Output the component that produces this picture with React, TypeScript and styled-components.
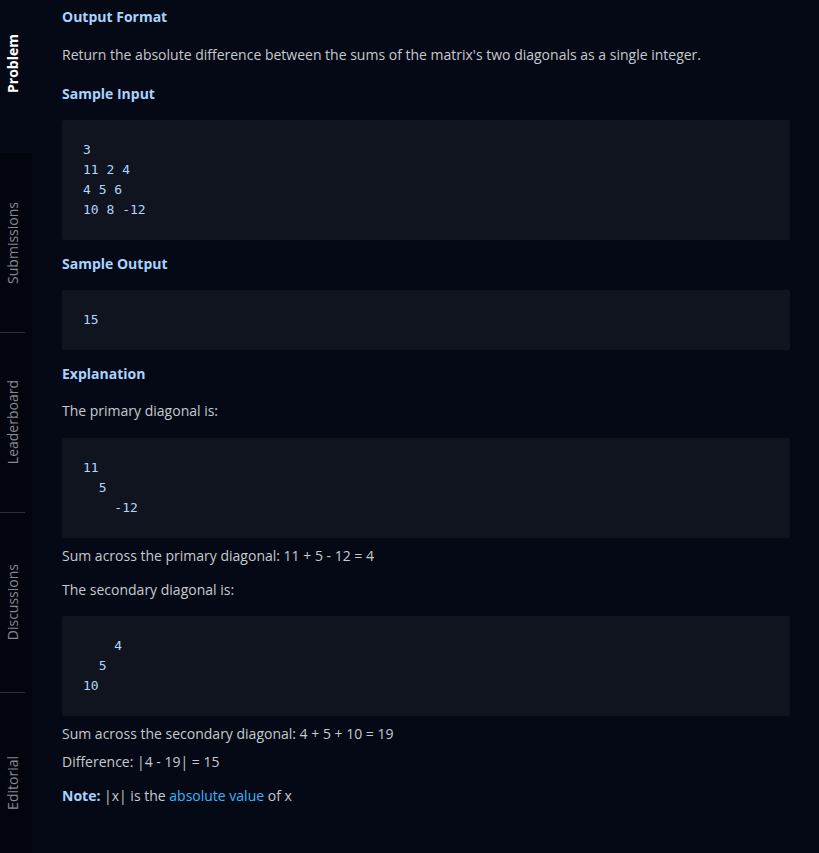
import * as React from 'react';
import styled, { createGlobalStyle } from 'styled-components';

const GlobalStyle = createGlobalStyle`
  html, body {
    margin: 0;
    padding: 0;
    background: #050915;
  }
  body {
    font-family: "Open Sans", "Liberation Sans", sans-serif;
  }
`;

interface ITab {
  label: string;
  active?: boolean;
  height: number;
  lift?: number;
  divider?: boolean;
}

// the page is scrolled, so the first tab is partly cut off at the top
const tabs: ITab[] = [
  { label: 'Problem', active: true, height: 153, lift: 27 },
  { label: 'Submissions', height: 180, divider: true },
  { label: 'Leaderboard', height: 180, divider: true },
  { label: 'Discussions', height: 180, divider: true },
  { label: 'Editorial', height: 180 },
];

const App = () => {
  return (
    <Page>
      <GlobalStyle />
      <SideBar>
        {tabs.map((t) => (
          <Tab
            key={t.label}
            active={t.active}
            divider={t.divider}
            lift={t.lift}
            style={{ height: t.height }}
          >
            <TabLabel active={t.active}>{t.label}</TabLabel>
          </Tab>
        ))}
      </SideBar>
      <Content>
        <Heading>Output Format</Heading>
        <Para gap={18}>
          Return the absolute difference between the sums of the matrix's two diagonals as a single integer.
        </Para>
        <Heading gap={19}>Sample Input</Heading>
        <Code gap={16}>{`3
11 2 4
4 5 6
10 8 -12`}</Code>
        <Heading gap={14}>Sample Output</Heading>
        <Code gap={16}>15</Code>
        <Heading gap={14}>Explanation</Heading>
        <Para gap={17}>The primary diagonal is:</Para>
        <Code gap={17}>{`11
  5
    -12`}</Code>
        <Para gap={8}>Sum across the primary diagonal: 11 + 5 - 12 = 4</Para>
        <Para gap={14}>The secondary diagonal is:</Para>
        <Code gap={16}>{`    4
  5
10`}</Code>
        <Para gap={8}>Sum across the secondary diagonal: 4 + 5 + 10 = 19</Para>
        <Para gap={8}>Difference: |4 - 19| = 15</Para>
        <Para gap={14}>
          <Strong>Note:</Strong> |x| is the <Link>absolute value</Link> of x
        </Para>
      </Content>
    </Page>
  );
};

export default App;

const Page = styled.div`
  display: flex;
  height: 853px;
  overflow: hidden;
  background: #050915;
`;

const SideBar = styled.div`
  width: 32px;
  flex-shrink: 0;
  display: flex;
  flex-direction: column;
  background: #03050e;
`;

const Tab = styled.div<{ active?: boolean; divider?: boolean; lift?: number }>`
  flex-shrink: 0;
  display: flex;
  align-items: center;
  justify-content: center;
  box-sizing: border-box;
  padding-bottom: ${(p) => p.lift || 0}px;
  background: ${(p) => (p.active ? '#050915' : '#03050e')};
  ${(p) => p.divider && `
    border-bottom: 1px solid transparent;
    border-image: linear-gradient(to right, #2a2e38 75%, transparent 75%) 1;
  `}
`;

const TabLabel = styled.span<{ active?: boolean }>`
  writing-mode: vertical-rl;
  transform: rotate(180deg);
  font-size: 14px;
  line-height: 20px;
  margin-right: 6px;
  font-weight: ${(p) => (p.active ? 700 : 400)};
  color: ${(p) => (p.active ? '#ffffff' : '#858990')};
`;

const Content = styled.div`
  flex: 1;
  padding: 7px 29px 0 30px;
`;

const Heading = styled.div<{ gap?: number }>`
  margin-top: ${(p) => p.gap || 0}px;
  font-size: 14px;
  line-height: 20px;
  font-weight: 700;
  color: #a9d3ff;
`;

const Para = styled.div<{ gap?: number }>`
  margin-top: ${(p) => p.gap || 0}px;
  font-size: 14px;
  line-height: 20px;
  color: #c6c9ce;
`;

const Strong = styled.span`
  font-weight: 700;
  color: #a9d3ff;
`;

const Link = styled.span`
  color: #3db5f5;
`;

const Code = styled.pre<{ gap?: number }>`
  margin: ${(p) => p.gap || 0}px 0 0;
  padding: 20px 21px;
  background: #0f141e;
  border-radius: 2px;
  font-family: "DejaVu Sans Mono", monospace;
  font-size: 13px;
  line-height: 20px;
  color: #b0d6ff;
`;
